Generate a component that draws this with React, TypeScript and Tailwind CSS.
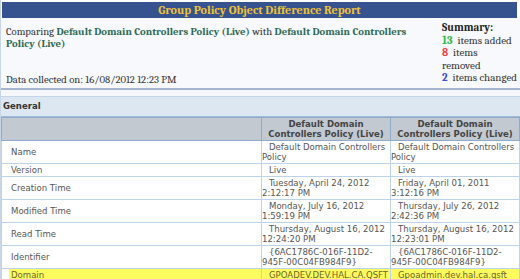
const rows: { label: string; a: string; b: string; hl?: boolean }[] = [
  { label: 'Name', a: 'Default Domain Controllers Policy', b: 'Default Domain Controllers Policy' },
  { label: 'Version', a: 'Live', b: 'Live' },
  { label: 'Creation Time', a: 'Tuesday, April 24, 2012 2:12:17 PM', b: 'Friday, April 01, 2011 3:12:16 PM' },
  { label: 'Modified Time', a: 'Monday, July 16, 2012 1:59:19 PM', b: 'Thursday, July 26, 2012 2:42:36 PM' },
  { label: 'Read Time', a: 'Thursday, August 16, 2012 12:24:20 PM', b: 'Thursday, August 16, 2012 12:23:01 PM' },
  { label: 'Identifier', a: '{6AC1786C-016F-11D2-945F-00C04FB984F9}', b: '{6AC1786C-016F-11D2-945F-00C04FB984F9}' },
  { label: 'Domain', a: 'GPOADEV.DEV.HAL.CA.QSFT', b: 'Gpoadmin.dev.hal.ca.qsft', hl: true },
]

export default function App() {
  return (
    <div className="w-[520px] h-[279px] overflow-hidden bg-white border-l border-[#c9d6e6]">
      <div className="mt-[2px] ml-[1px] mr-[3px] h-[16px] bg-[#36538f] flex items-center justify-center">
        <span className="font-serif font-bold text-[12px] text-[#f1c232] leading-none">
          Group Policy Object Difference Report
        </span>
      </div>
      <div className="h-[70px] bg-[#f8f9fc] flex font-serif text-[10.7px] text-[#333]">
        <div className="w-[437px] pl-[5px] pr-[14px] pt-[8px] pb-[2px] flex flex-col justify-between leading-[12px]">
          <p>
            Comparing <b className="text-[#2d6a55]">Default Domain Controllers Policy (Live)</b> with{' '}
            <b className="text-[#2d6a55]">Default Domain Controllers</b>{' '}
            <b className="text-[#2d6a55]">Policy (Live)</b>
          </p>
          <p>Data collected on: 16/08/2012 12:23 PM</p>
        </div>
        <div className="flex-1 pl-[4px] pt-[4px] leading-[12.5px] text-[11px]">
          <b className="text-[#222]">Summary:</b>
          <div><b className="text-[#2eb84a]">13</b>&nbsp; items added</div>
          <div><b className="text-[#ee3c3c]">8</b>&nbsp; items<br />removed</div>
          <div><b className="text-[#3d4fd6]">2</b>&nbsp; items changed</div>
        </div>
      </div>
      <div className="h-[2px] bg-[#a6b5cf]" />
      <div className="h-[7px] bg-[#f5f7fa] border-b border-[#c5d5e8]" />
      <div className="h-[20px] bg-[#dde7f1] border-b border-[#9fbbd8] flex items-center pl-[2px] font-['DejaVu_Sans_Condensed'] font-bold text-[9.5px] text-[#333]">
        General
      </div>
      <table className="w-[518px] table-fixed border-collapse font-['DejaVu_Sans_Condensed'] text-[9.5px] leading-[10px] text-[#555]">
        <colgroup>
          <col className="w-[260px]" />
          <col className="w-[129px]" />
          <col className="w-[129px]" />
        </colgroup>
        <thead>
          <tr className="h-[22px] bg-[#c2c9d1]">
            <th className="border border-[#8eabc9]" />
            <th className="border border-[#8eabc9] font-bold text-[#444] text-center py-px">Default Domain Controllers Policy (Live)</th>
            <th className="border border-[#8eabc9] font-bold text-[#444] text-center py-px">Default Domain Controllers Policy (Live)</th>
          </tr>
        </thead>
        <tbody>
          {rows.map(r => (
            <tr key={r.label} className={r.hl ? 'bg-[#fcfc5e] text-[#6d6530]' : 'bg-white'}>
              <td className={r.hl ? 'border border-[#bcd3ea] py-px pl-[9px] align-middle shadow-[inset_7px_0_0_#fff]' : 'border border-[#bcd3ea] py-px pl-[9px] align-middle'}>{r.label}</td>
              <td className={r.hl ? 'border border-[#bcd3ea] py-px indent-[7px] align-top break-all' : 'border border-[#bcd3ea] py-px indent-[7px] align-top'}>{r.a}</td>
              <td className="border border-[#bcd3ea] py-px indent-[7px] align-top">{r.b}</td>
            </tr>
          ))}
        </tbody>
      </table>
    </div>
  )
}
